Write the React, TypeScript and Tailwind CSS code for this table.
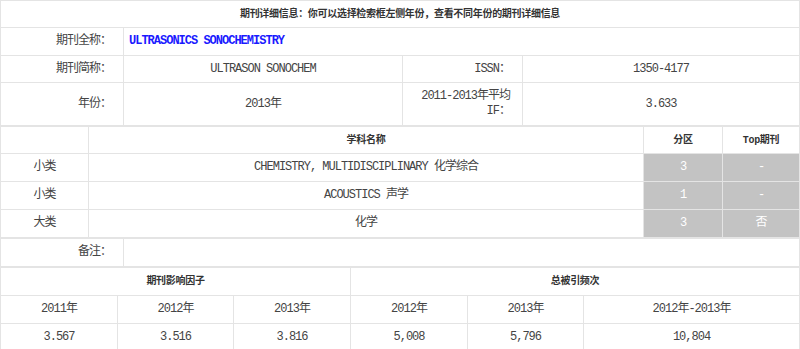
import React from "react";

const cell = "border border-[#e4e4e4] px-1 text-center align-middle";
const head = "border border-[#e4e4e4] text-center align-middle text-[10px] font-bold text-[#333] tracking-[-0.3px]";
const gray = "border border-[#e4e4e4] bg-[#c3c3c3] text-center align-middle text-white";

export default function App() {
  return (
    <div
      className="w-[800px] bg-white text-[12px] leading-[15px] text-[#444] tracking-[-1px]"
      style={{ fontFamily: '"Liberation Mono", "Noto Sans CJK SC", monospace' }}
    >
      {/* Basic info */}
      <table className="w-full border-collapse table-fixed">
        <colgroup>
          <col className="w-[123px]" />
          <col className="w-[279px]" />
          <col className="w-[120px]" />
          <col />
        </colgroup>
        <tbody>
          <tr className="h-[27px]">
            <td colSpan={4} className={head}>
              期刊详细信息：你可以选择检索框左侧年份，查看不同年份的期刊详细信息
            </td>
          </tr>
          <tr className="h-[28px]">
            <td className={`${cell} text-right pr-3`}>期刊全称：</td>
            <td colSpan={3} className="border border-[#e4e4e4] px-[5px] text-left font-bold text-[#1a1aff]">
              ULTRASONICS SONOCHEMISTRY
            </td>
          </tr>
          <tr className="h-[27px]">
            <td className={`${cell} text-right pr-3`}>期刊简称：</td>
            <td className={cell}>ULTRASON SONOCHEM</td>
            <td className={`${cell} text-right pr-3`}>ISSN：</td>
            <td className={cell}>1350-4177</td>
          </tr>
          <tr className="h-[43px]">
            <td className={`${cell} text-right pr-3`}>年份：</td>
            <td className={cell}>2013年</td>
            <td className={`${cell} text-right pr-3`}>
              2011-2013年平均
              <br />
              IF：
            </td>
            <td className={cell}>3.633</td>
          </tr>
        </tbody>
      </table>

      {/* Subjects */}
      <table className="w-full border-collapse table-fixed">
        <colgroup>
          <col className="w-[88px]" />
          <col className="w-[555px]" />
          <col className="w-[79px]" />
          <col />
        </colgroup>
        <tbody>
          <tr className="h-[27px]">
            <td className={cell}></td>
            <td className={head}>学科名称</td>
            <td className={head}>分区</td>
            <td className={head}>Top期刊</td>
          </tr>
          <tr className="h-[28px]">
            <td className={cell}>小类</td>
            <td className={cell}>CHEMISTRY, MULTIDISCIPLINARY 化学综合</td>
            <td className={gray}>3</td>
            <td className={gray}>-</td>
          </tr>
          <tr className="h-[28px]">
            <td className={cell}>小类</td>
            <td className={cell}>ACOUSTICS 声学</td>
            <td className={gray}>1</td>
            <td className={gray}>-</td>
          </tr>
          <tr className="h-[28px]">
            <td className={cell}>大类</td>
            <td className={cell}>化学</td>
            <td className={gray}>3</td>
            <td className={gray}>否</td>
          </tr>
        </tbody>
      </table>

      {/* Remarks */}
      <table className="w-full border-collapse table-fixed">
        <colgroup>
          <col className="w-[123px]" />
          <col />
        </colgroup>
        <tbody>
          <tr className="h-[28px]">
            <td className={`${cell} text-right pr-3`}>备注：</td>
            <td className={cell}></td>
          </tr>
        </tbody>
      </table>

      {/* Impact factor and citations */}
      <table className="w-full border-collapse table-fixed">
        <colgroup>
          <col className="w-[117px]" />
          <col className="w-[116px]" />
          <col className="w-[117px]" />
          <col className="w-[117px]" />
          <col className="w-[116px]" />
          <col />
        </colgroup>
        <tbody>
          <tr className="h-[28px]">
            <td colSpan={3} className={head}>期刊影响因子</td>
            <td colSpan={3} className={head}>总被引频次</td>
          </tr>
          <tr className="h-[28px]">
            <td className={cell}>2011年</td>
            <td className={cell}>2012年</td>
            <td className={cell}>2013年</td>
            <td className={cell}>2012年</td>
            <td className={cell}>2013年</td>
            <td className={cell}>2012年-2013年</td>
          </tr>
          <tr className="h-[27px]">
            <td className={cell}>3.567</td>
            <td className={cell}>3.516</td>
            <td className={cell}>3.816</td>
            <td className={cell}>5,008</td>
            <td className={cell}>5,796</td>
            <td className={cell}>10,804</td>
          </tr>
        </tbody>
      </table>
    </div>
  );
}
